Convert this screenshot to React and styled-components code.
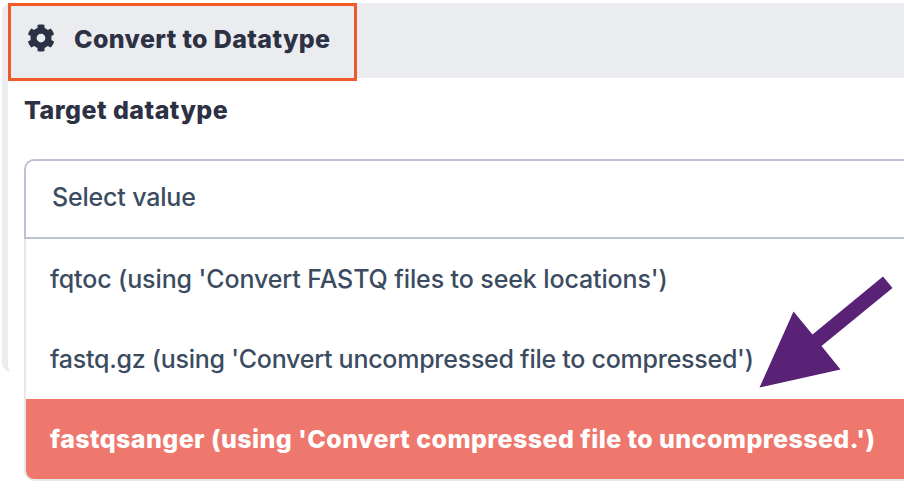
import React from "react";
import styled, { createGlobalStyle } from "styled-components";
import { FaCog } from "react-icons/fa";

const GlobalStyle = createGlobalStyle`
  *, *::before, *::after { box-sizing: border-box; }
  body {
    margin: 0;
    overflow: hidden;
    background: #fff;
    color: #2c3143;
    font-family: Inter, "Liberation Sans", sans-serif;
  }
`;

const Page = styled.main`
  position: relative;
  width: 904px;
  height: 500px;
  padding: 3px 0 0 2px;
  overflow: hidden;
`;

const Card = styled.section`
  height: 369px;
  border-left: 6px solid #ebecf0;
  border-radius: 9px 0 0 9px;
`;

const CardHeader = styled.header`
  height: 75px;
  background: #ebecf0;
`;

const Title = styled.h1`
  display: flex;
  align-items: flex-start;
  width: 349px;
  height: 78px;
  margin: 0;
  padding: 17px 0 0 16px;
  border: 3px solid #f05a2a;
  font-size: 25px;
  line-height: 32px;
  font-weight: 800;
`;

const Gear = styled(FaCog)`
  width: 28px;
  height: 28px;
  margin: 0.5px 19px 0 0;
  flex: none;
`;

const CardBody = styled.div`
  padding: 16px 0 0 16px;
`;

const Label = styled.label`
  display: block;
  height: 65px;
  font-size: 25px;
  line-height: 32px;
  font-weight: 800;
`;

const Text = styled.span`
  white-space: nowrap;
  letter-spacing: ${(p) => p.$spacing || 0}px;
`;

const Control = styled.div`
  display: flex;
  align-items: center;
  height: 80px;
  padding: 0 0 4px 26px;
  border: 2px solid #bdc2d0;
  border-right: 0;
  border-radius: 10px 0 0 0;
  color: #3b4c61;
  font-size: 25px;
  font-weight: 450;
`;

const Options = styled.ul`
  height: 242px;
  margin: 0;
  padding: 0;
  list-style: none;
  border: 2px solid #e8e8e8;
  border-width: 0 0 2px 2px;
  border-radius: 0 0 0 10px;
  overflow: hidden;
`;

const Option = styled.li`
  display: flex;
  align-items: center;
  height: 80px;
  padding-left: 24px;
  color: ${(p) => (p.$active ? "#fff" : "#3b4c61")};
  background: ${(p) => (p.$active ? "#ee786e" : "transparent")};
  font-size: 25px;
  font-weight: ${(p) => (p.$active ? 800 : 450)};
`;

const Arrow = styled.svg`
  position: absolute;
  left: 759px;
  top: 276px;
  width: 134px;
  height: 112px;
`;

const options = [
  { text: "fqtoc (using 'Convert FASTQ files to seek locations')", spacing: -0.11 },
  { text: "fastq.gz (using 'Convert uncompressed file to compressed')", spacing: -0.26 },
  { text: "fastqsanger (using 'Convert compressed file to uncompressed.')", spacing: 0.42, active: true },
];

export default function App() {
  return (
    <Page>
      <GlobalStyle />
      <Card>
        <CardHeader>
          <Title>
            <Gear aria-hidden="true" />
            <Text $spacing={0.37}>Convert to Datatype</Text>
          </Title>
        </CardHeader>
        <CardBody>
          <Label><Text $spacing={0.47}>Target datatype</Text></Label>
          <Control><Text $spacing={-0.18}>Select value</Text></Control>
          <Options>
            {options.map((o) => (
              <Option key={o.text} $active={o.active}>
                <Text $spacing={o.spacing}>{o.text}</Text>
              </Option>
            ))}
          </Options>
        </CardBody>
      </Card>
      <Arrow viewBox="0 0 134 112" aria-hidden="true">
        <path fill="#592277" d="M124 .5 133.5 12 62.5 70 81.5 93.5.5 111.5 34.5 35.5 53.5 58.5Z" />
      </Arrow>
    </Page>
  );
}
